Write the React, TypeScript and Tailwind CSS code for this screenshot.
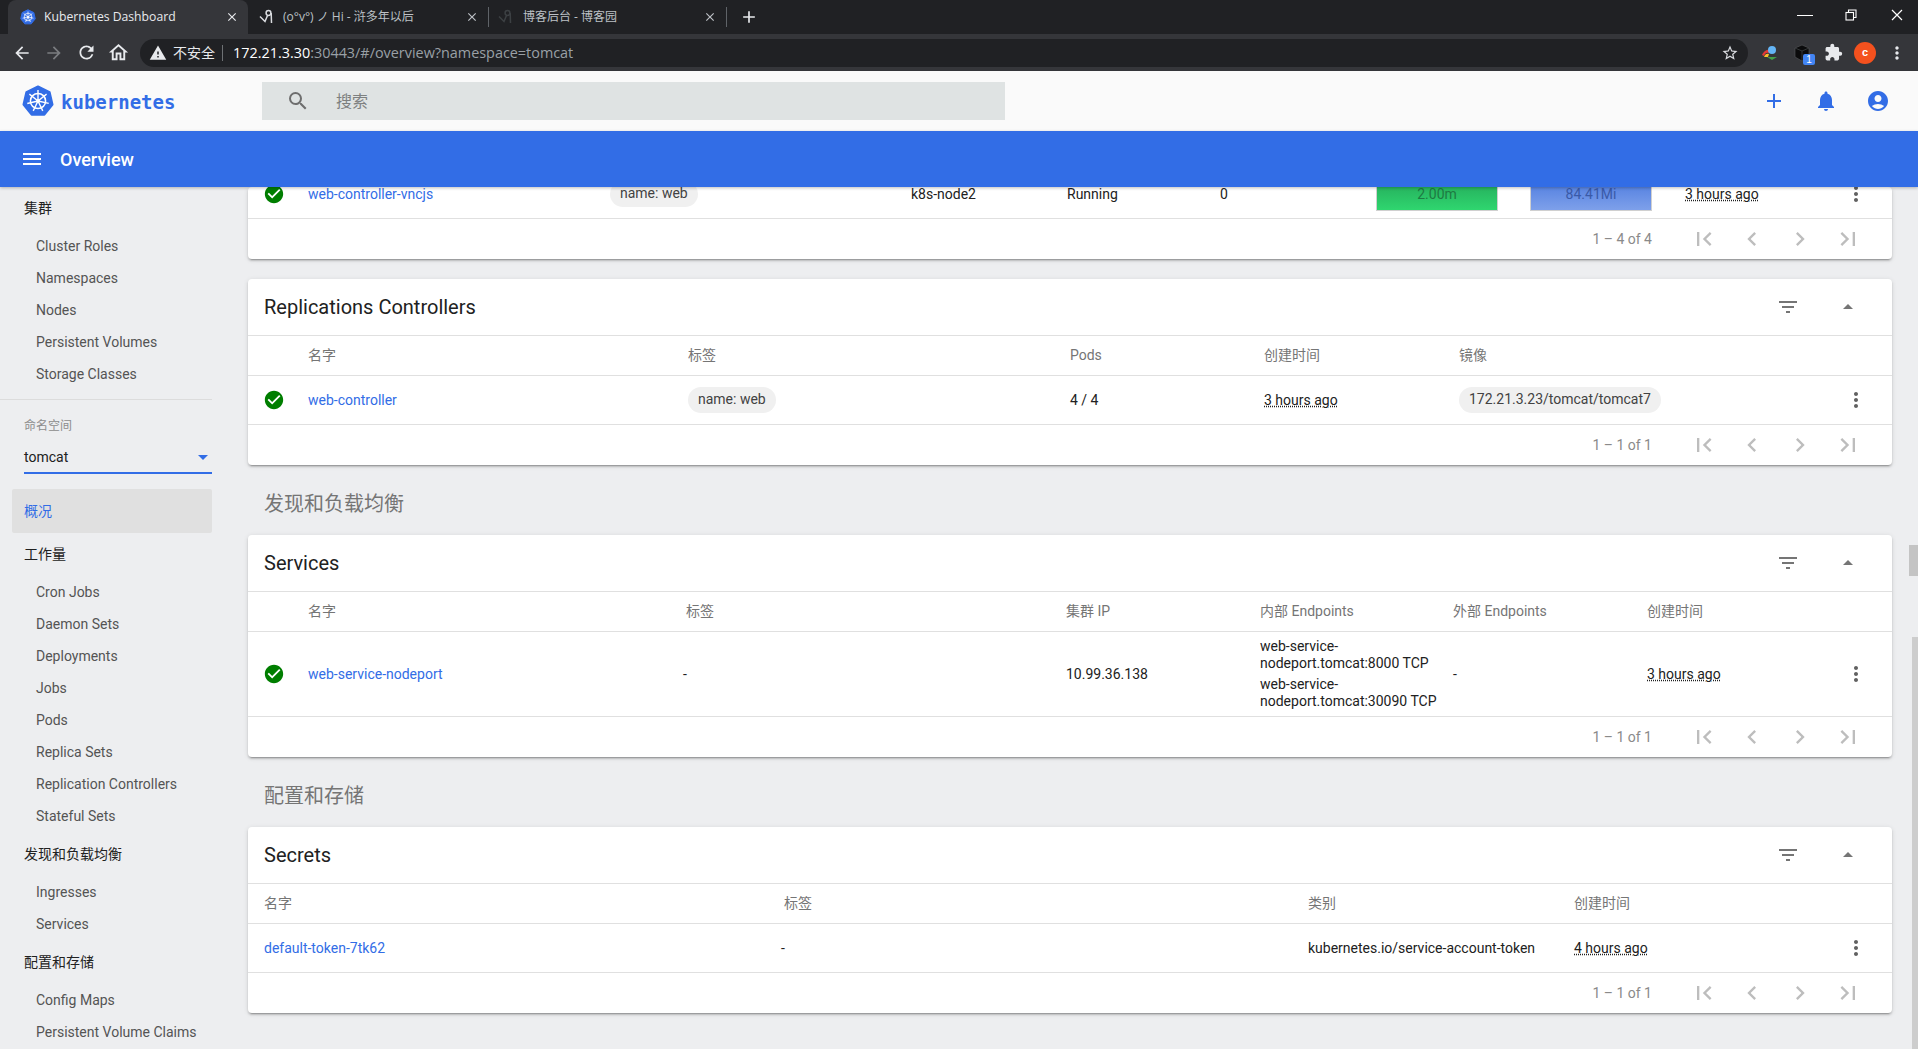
import React from "react";
import {
  MdAdd,
  MdAccountCircle,
  MdArrowDropDown,
  MdArrowDropUp,
  MdCheckCircle,
  MdChevronLeft,
  MdChevronRight,
  MdFilterList,
  MdFirstPage,
  MdLastPage,
  MdMenu,
  MdMoreVert,
  MdNotifications,
  MdOutlineHome,
  MdSearch,
  MdArrowBack,
  MdArrowForward,
  MdRefresh,
  MdClose,
  MdStarBorder,
  MdWarning,
  MdExtension,
} from "react-icons/md";

const ROBOTO = "font-['Roboto','Noto_Sans_CJK_SC',sans-serif]";
const CJK = "font-['Noto_Sans_CJK_SC','Roboto',sans-serif]";

function KubeLogo({ size }: { size: number }) {
  const spokes = [0, 51.4, 102.8, 154.3, 205.7, 257.1, 308.6];
  return (
    <svg width={size} height={size} viewBox="0 0 32 32">
      <path
        d="M16 1.5 27.6 7.1 30.5 19.6 22.4 29.7H9.6L1.5 19.6 4.4 7.1Z"
        fill="#326de6"
        stroke="#326de6"
        strokeWidth="2"
        strokeLinejoin="round"
      />
      <circle cx="16" cy="16" r="7.6" fill="none" stroke="#fff" strokeWidth="1.5" />
      <circle cx="16" cy="16" r="2" fill="#fff" />
      {spokes.map((a) => (
        <line key={a} x1="16" y1="16" x2="16" y2="5" stroke="#fff" strokeWidth="1.4" transform={`rotate(${a} 16 16)`} />
      ))}
    </svg>
  );
}

function TabGlyph({ color }: { color: string }) {
  return (
    <svg width="16" height="16" viewBox="0 0 16 16" fill="none" stroke={color} strokeWidth="1.5">
      <circle cx="9.5" cy="4" r="2.4" />
      <path d="M1 7.5 6 12.5 8.5 6.5M12.2 4 12.5 14" />
    </svg>
  );
}

function Tabs() {
  return (
    <div className="h-[34px] bg-[#202124] flex pl-2 text-[12px] font-['Open_Sans','Noto_Sans_CJK_SC',sans-serif]">
      <div className="w-[240px] h-[34px] bg-[#35363a] rounded-t-[8px] flex items-center pl-[12px] text-[#e8eaed]">
        <KubeLogo size={16} />
        <span className="ml-[8px] flex-1 text-[12.2px]">Kubernetes Dashboard</span>
        <MdClose size={14} className="mr-[9px] text-[#e8eaed]" />
      </div>
      <div className="w-[240px] h-[34px] flex items-center pl-[11px] text-[#bdc1c6]">
        <TabGlyph color="#dadce0" />
        <span className="ml-[8px] flex-1">(o°v°) ノ Hi - 浒多年以后</span>
        <MdClose size={14} className="mr-[9px]" />
      </div>
      <div className="w-[1px] h-[20px] mt-[7px] bg-[#5f6368]" />
      <div className="w-[237px] h-[34px] flex items-center pl-[9px] text-[#bdc1c6]">
        <TabGlyph color="#3c4043" />
        <span className="ml-[9px] flex-1">博客后台 - 博客园</span>
        <MdClose size={14} className="mr-[9px]" />
      </div>
      <div className="w-[1px] h-[20px] mt-[7px] bg-[#5f6368]" />
      <div className="w-[44px] flex items-center pl-[12px]">
        <MdAdd size={20} className="text-[#e8eaed]" />
      </div>
      <div className="flex-1" />
      <div className="flex items-center text-white pr-[13px] gap-[30px] pb-1">
        <div className="w-[16px] h-[1px] bg-white" />
        <svg width="16" height="16" viewBox="0 0 16 16" fill="none" stroke="#fff" strokeWidth="1.1">
          <rect x="3" y="5.5" width="7.5" height="7.5" />
          <path d="M5.5 5.5V3H13v7.5h-2.5" />
        </svg>
        <svg width="16" height="16" viewBox="0 0 16 16" stroke="#fff" strokeWidth="1.2">
          <path d="M3 3l10 10M13 3 3 13" />
        </svg>
      </div>
    </div>
  );
}

function Toolbar() {
  return (
    <div className="h-[37px] bg-[#35363a] flex items-center pl-[10px] pr-[7px] text-[#e8eaed]">
      <div className="w-[24px] flex justify-center">
        <MdArrowBack size={20} />
      </div>
      <div className="w-[8px]" />
      <div className="w-[24px] flex justify-center text-[#7b7d80]">
        <MdArrowForward size={20} />
      </div>
      <div className="w-[8px]" />
      <div className="w-[24px] flex justify-center">
        <MdRefresh size={21} />
      </div>
      <div className="w-[8px]" />
      <div className="w-[24px] flex justify-center">
        <MdOutlineHome size={23} />
      </div>
      <div className="ml-[10px] w-[1608px] h-[28px] rounded-full bg-[#202124] flex items-center pl-[9px] pr-[9px] text-[14.4px] font-['Open_Sans','Noto_Sans_CJK_SC',sans-serif]">
        <MdWarning size={18} className="text-[#e8eaed]" />
        <span className="ml-[6px] text-[#e8eaed] text-[14px]">不安全</span>
        <div className="w-[1px] h-[16px] bg-[#6e7174] ml-[7px] mr-[10px]" />
        <span className="text-white">172.21.3.30</span>
        <span className="text-[#9aa0a6]">:30443/#/overview?namespace=tomcat</span>
        <div className="flex-1" />
        <MdStarBorder size={18} className="text-[#dadce0]" />
      </div>
      <div className="ml-[12px] w-[20px] flex justify-center">
        <svg width="18" height="16" viewBox="0 0 18 16">
          <path d="M1 10c2-5 6-6 9-5l-2 3c-2-1-4 0-5 3Z" fill="#e53935" />
          <path d="M3 12c1-3 3-4 5-3l-1 3Z" fill="#fbc02d" />
          <circle cx="11" cy="5" r="4" fill="#64b5f6" />
          <path d="M6 12h10l-5 3Z" fill="#43a047" />
        </svg>
      </div>
      <div className="ml-[13px] w-[21px] relative">
        <svg width="18" height="18" viewBox="0 0 18 18">
          <path d="M9 1 16 4v9l-7 4-7-4V4Z" fill="#0b0b0c" stroke="#55575b" strokeWidth="0.6" />
          <path d="M2 4l7 3 7-3M9 7v10" fill="none" stroke="#3c4043" strokeWidth="0.8" />
        </svg>
        <span className="absolute left-[10px] top-[10px] w-[12px] h-[11px] rounded-[2px] bg-[#4285f4] text-white text-[10px] leading-[11px] text-center font-['Liberation_Sans',sans-serif]">
          1
        </span>
      </div>
      <div className="ml-[8px] w-[22px] flex justify-center">
        <MdExtension size={19} className="text-[#e8eaed]" />
      </div>
      <div className="ml-[10px] w-[22px] h-[22px] rounded-full bg-[#f4511e] text-white text-[11px] font-bold flex items-center justify-center font-['Liberation_Sans',sans-serif]">
        c
      </div>
      <div className="ml-[10px] w-[22px] flex justify-center">
        <MdMoreVert size={20} className="text-[#e8eaed]" />
      </div>
    </div>
  );
}

function TopBar() {
  return (
    <div className="h-[60px] bg-[#fafafa] flex items-center shadow-[0_1px_2px_rgba(0,0,0,0.12)] relative">
      <div className="ml-[22px] w-[240px] flex items-center">
        <KubeLogo size={32} />
        <span className="ml-[7px] pt-[2px] text-[#326de6] text-[19px] font-bold font-['DejaVu_Sans_Mono',monospace]">kubernetes</span>
      </div>
      <div className={`w-[743px] h-[38px] bg-[#dfe3e3] flex items-center pl-[24px] ${CJK}`}>
        <MdSearch size={24} className="text-[#6e6e6e]" />
        <span className="ml-[26px] pb-[2px] text-[16px] text-[#7d8080]">搜索</span>
      </div>
      <div className="flex-1" />
      <div className="flex items-center text-[#326de6] gap-[28px] pr-[28px]">
        <MdAdd size={24} />
        <MdNotifications size={24} />
        <MdAccountCircle size={24} />
      </div>
    </div>
  );
}

function BlueBar() {
  return (
    <div className={`h-[56px] bg-[#326de6] flex items-center pl-[20px] text-white relative z-10 shadow-[0_1px_3px_rgba(0,0,0,0.25)] ${ROBOTO}`}>
      <MdMenu size={24} />
      <span className="ml-[16px] text-[18px] font-medium">Overview</span>
    </div>
  );
}

function SideTitle({ children }: { children: React.ReactNode }) {
  return <div className={`h-[44px] pl-[24px] pb-[1px] flex items-center text-[14px] text-[#212121] ${CJK}`}>{children}</div>;
}

function SideItem({ children }: { children: React.ReactNode }) {
  return <div className="h-[32px] pl-[36px] flex items-center text-[14px] text-[#545454]">{children}</div>;
}

function Sidebar() {
  return (
    <aside className={`w-[248px] shrink-0 -mt-[1px] ${ROBOTO}`}>
      <SideTitle>集群</SideTitle>
      {["Cluster Roles", "Namespaces", "Nodes", "Persistent Volumes", "Storage Classes"].map((n) => (
        <SideItem key={n}>{n}</SideItem>
      ))}
      <div className="h-[1px] w-[212px] bg-[#dcdcdc] mt-[9px]" />
      <div className={`ml-[24px] mt-[17px] text-[12px] leading-[16px] text-[#8c8c8c] ${CJK}`}>命名空间</div>
      <div className="ml-[24px] w-[188px] h-[38px] mt-[3px] border-b-2 border-[#326de6] flex items-center justify-between text-[14px] text-[#212121] pt-[6px]">
        <span>tomcat</span>
        <MdArrowDropDown size={24} className="text-[#326de6] -mr-[3px]" />
      </div>
      <div className={`ml-[12px] w-[200px] h-[44px] mt-[15px] rounded-[2px] bg-[#e0e0e0] flex items-center pl-[12px] pb-[2px] text-[14px] text-[#326de6] ${CJK}`}>
        概况
      </div>
      <div className="-mt-[1px]">
        <SideTitle>工作量</SideTitle>
      </div>
      {["Cron Jobs", "Daemon Sets", "Deployments", "Jobs", "Pods", "Replica Sets", "Replication Controllers", "Stateful Sets"].map((n) => (
        <SideItem key={n}>{n}</SideItem>
      ))}
      <SideTitle>发现和负载均衡</SideTitle>
      {["Ingresses", "Services"].map((n) => (
        <SideItem key={n}>{n}</SideItem>
      ))}
      <SideTitle>配置和存储</SideTitle>
      {["Config Maps", "Persistent Volume Claims"].map((n) => (
        <SideItem key={n}>{n}</SideItem>
      ))}
    </aside>
  );
}

function Pager({ range }: { range: string }) {
  return (
    <div className="h-[40px] flex items-center justify-end text-[#bdbdbd]">
      <span className="text-[14px] text-[#8a8a8a] mr-[38px]">{range}</span>
      <div className="flex items-center pr-[30px] gap-[20px]">
        <MdFirstPage size={28} />
        <MdChevronLeft size={28} />
        <MdChevronRight size={28} />
        <MdLastPage size={28} />
      </div>
    </div>
  );
}

function CardHead({ title }: { title: string }) {
  return (
    <div className="h-[57px] pl-[16px] pr-[32px] flex items-center border-b border-[#e0e0e0] gap-[36px]">
      <span className="flex-1 text-[20px] text-[#212121]">{title}</span>
      <MdFilterList size={24} className="text-[#757575]" />
      <MdArrowDropUp size={24} className="text-[#757575]" />
    </div>
  );
}

function Card({ children }: { children: React.ReactNode }) {
  return (
    <div className="mr-[26px] bg-white rounded-[4px] shadow-[0_3px_1px_-2px_rgba(0,0,0,0.2),0_2px_2px_0_rgba(0,0,0,0.14),0_1px_5px_0_rgba(0,0,0,0.12)] text-[14px] text-[#212121]">
      {children}
    </div>
  );
}

function Th({ children }: { children?: React.ReactNode }) {
  return <div className={`text-[14px] text-[#757575] ${ROBOTO}`}>{children}</div>;
}

function Chip({ children }: { children: React.ReactNode }) {
  return <span className="inline-block h-[26px] leading-[25px] px-[10px] rounded-full bg-[#f0f0f0] text-[#424242] whitespace-nowrap">{children}</span>;
}

function Ago({ children }: { children: React.ReactNode }) {
  return <span className="underline decoration-dotted underline-offset-1 decoration-[#212121] whitespace-nowrap">{children}</span>;
}

function Ok() {
  return (
    <div className="pl-[15px]">
      <MdCheckCircle size={22} className="text-[#007e00]" />
    </div>
  );
}

function More() {
  return <MdMoreVert size={24} className="ml-[4px] text-[#616161]" />;
}

function Lnk({ children }: { children: React.ReactNode }) {
  return <a className="text-[#326de6] whitespace-nowrap">{children}</a>;
}

function SectionTitle({ children }: { children: React.ReactNode }) {
  return <div className={`h-[70px] pl-[16px] flex items-center pt-[6px] text-[20px] text-[#757575] ${CJK}`}>{children}</div>;
}

function Main() {
  return (
    <main className={`flex-1 min-w-0 ${ROBOTO}`}>
      {/* first card is scrolled, only its last row shows under the blue bar */}
      <Card>
        <div className="h-[32px] grid grid-cols-[60px_302px_301px_156px_153px_156px_154px_155px_155px_1fr] items-center border-b border-[#e0e0e0] overflow-hidden">
          <div className="-mt-[17px]">
            <Ok />
          </div>
          <div className="-mt-[17px]">
            <Lnk>web-controller-vncjs</Lnk>
          </div>
          <div className="-mt-[17px]">
            <Chip>name: web</Chip>
          </div>
          <div className="-mt-[17px]">k8s-node2</div>
          <div className="-mt-[17px]">Running</div>
          <div className="-mt-[17px]">0</div>
          <div className="self-start h-[24px] w-[122px] border border-t-0 border-[#d0d0d0] bg-[linear-gradient(#27b45f,#2fd66f)] text-[#1e7a42] text-center leading-[14px]">2.00m</div>
          <div className="self-start h-[24px] w-[122px] border border-t-0 border-[#d0d0d0] bg-[linear-gradient(#5a85e2,#7ea0ea)] text-[#3a5aa8] text-center leading-[14px]">84.41Mi</div>
          <div className="-mt-[17px]">
            <Ago>3 hours ago</Ago>
          </div>
          <div className="-mt-[17px]">
            <More />
          </div>
        </div>
        <Pager range="1 – 4 of 4" />
      </Card>

      <div className="h-[20px]" />
      <Card>
        <CardHead title="Replications Controllers" />
        <div className="h-[40px] grid grid-cols-[60px_380px_382px_194px_195px_1fr] items-center border-b border-[#e0e0e0]">
          <div />
          <Th>名字</Th>
          <Th>标签</Th>
          <Th>Pods</Th>
          <Th>创建时间</Th>
          <Th>镜像</Th>
        </div>
        <div className="h-[49px] grid grid-cols-[60px_380px_382px_194px_195px_381px_1fr] items-center border-b border-[#e0e0e0]">
          <Ok />
          <Lnk>web-controller</Lnk>
          <div>
            <Chip>name: web</Chip>
          </div>
          <div>4 / 4</div>
          <div>
            <Ago>3 hours ago</Ago>
          </div>
          <div>
            <Chip>172.21.3.23/tomcat/tomcat7</Chip>
          </div>
          <More />
        </div>
        <Pager range="1 – 1 of 1" />
      </Card>

      <SectionTitle>发现和负载均衡</SectionTitle>
      <Card>
        <CardHead title="Services" />
        <div className="h-[40px] grid grid-cols-[60px_378px_380px_194px_193px_194px_1fr] items-center border-b border-[#e0e0e0]">
          <div />
          <Th>名字</Th>
          <Th>标签</Th>
          <Th>集群 IP</Th>
          <Th>内部 Endpoints</Th>
          <Th>外部 Endpoints</Th>
          <Th>创建时间</Th>
        </div>
        <div className="h-[85px] grid grid-cols-[60px_378px_380px_194px_193px_194px_193px_1fr] items-center border-b border-[#e0e0e0]">
          <Ok />
          <Lnk>web-service-nodeport</Lnk>
          <div className="-ml-[3px]">-</div>
          <div>10.99.36.138</div>
          <div className="text-[14px] leading-[17px] flex flex-col gap-[4px]">
            <div>
              web-service-
              <br />
              nodeport.tomcat:8000 TCP
            </div>
            <div>
              web-service-
              <br />
              nodeport.tomcat:30090 TCP
            </div>
          </div>
          <div>-</div>
          <div>
            <Ago>3 hours ago</Ago>
          </div>
          <More />
        </div>
        <Pager range="1 – 1 of 1" />
      </Card>

      <SectionTitle>配置和存储</SectionTitle>
      <Card>
        <CardHead title="Secrets" />
        <div className="h-[40px] pl-[16px] grid grid-cols-[520px_524px_266px_1fr] items-center border-b border-[#e0e0e0]">
          <Th>名字</Th>
          <Th>标签</Th>
          <Th>类别</Th>
          <Th>创建时间</Th>
        </div>
        <div className="h-[49px] pl-[16px] grid grid-cols-[520px_524px_266px_266px_1fr] items-center border-b border-[#e0e0e0]">
          <Lnk>default-token-7tk62</Lnk>
          <div className="-ml-[3px]">-</div>
          <div className="whitespace-nowrap">kubernetes.io/service-account-token</div>
          <div>
            <Ago>4 hours ago</Ago>
          </div>
          <More />
        </div>
        <Pager range="1 – 1 of 1" />
      </Card>
    </main>
  );
}

export default function App() {
  return (
    <div className="relative w-[1918px] h-[1049px] overflow-hidden bg-[#edeef0] font-['Roboto',sans-serif]">
      <Tabs />
      <Toolbar />
      <TopBar />
      <BlueBar />
      <div className="flex">
        <Sidebar />
        <Main />
      </div>
      {/* scrollbar thumbs on the right edge */}
      <div className="absolute right-0 top-[545px] w-[9px] h-[31px] bg-[#c4c4c4]" />
      <div className="absolute right-0 top-[637px] w-[6px] h-[412px] bg-[#cdcdcd]" />
    </div>
  );
}
